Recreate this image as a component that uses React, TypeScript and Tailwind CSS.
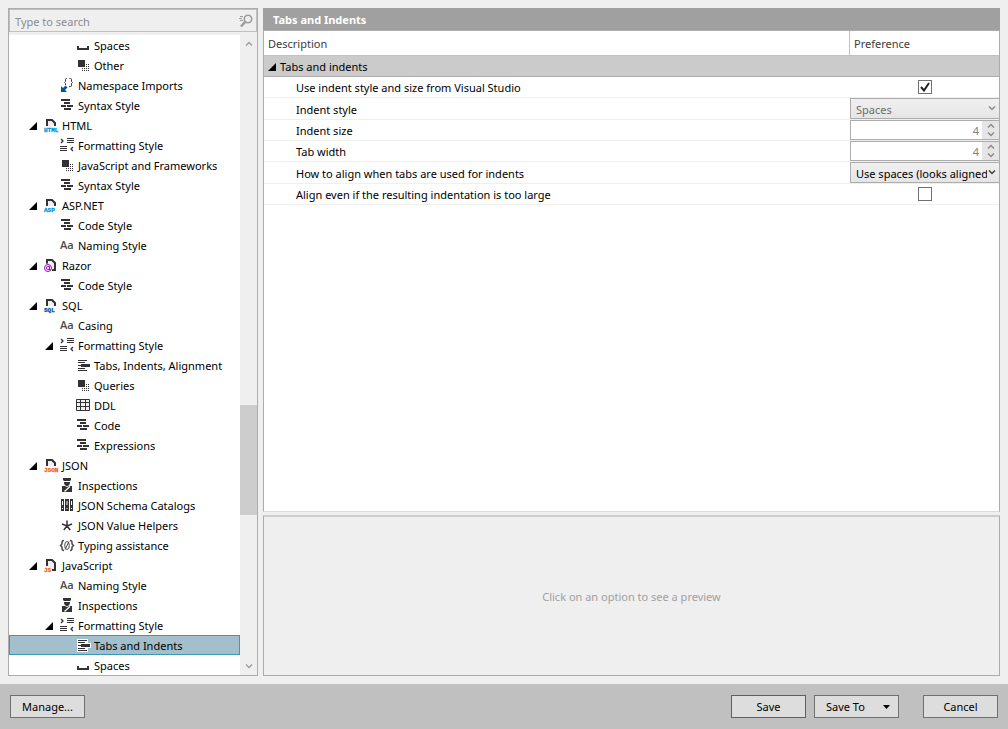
import type { ReactNode } from "react"

type IconName =
  | "spaces"
  | "other"
  | "imports"
  | "syntax"
  | "html"
  | "asp"
  | "razor"
  | "sql"
  | "json"
  | "js"
  | "formatting"
  | "naming"
  | "tabs"
  | "table"
  | "inspections"
  | "catalogs"
  | "asterisk"
  | "typing"

interface TreeNode {
  label: string
  icon: IconName
  level: 1 | 2 | 3
  expanded?: boolean
  selected?: boolean
}

const nodes: TreeNode[] = [
  { label: "Spaces", icon: "spaces", level: 3 },
  { label: "Other", icon: "other", level: 3 },
  { label: "Namespace Imports", icon: "imports", level: 2 },
  { label: "Syntax Style", icon: "syntax", level: 2 },
  { label: "HTML", icon: "html", level: 1, expanded: true },
  { label: "Formatting Style", icon: "formatting", level: 2 },
  { label: "JavaScript and Frameworks", icon: "other", level: 2 },
  { label: "Syntax Style", icon: "syntax", level: 2 },
  { label: "ASP.NET", icon: "asp", level: 1, expanded: true },
  { label: "Code Style", icon: "syntax", level: 2 },
  { label: "Naming Style", icon: "naming", level: 2 },
  { label: "Razor", icon: "razor", level: 1, expanded: true },
  { label: "Code Style", icon: "syntax", level: 2 },
  { label: "SQL", icon: "sql", level: 1, expanded: true },
  { label: "Casing", icon: "naming", level: 2 },
  { label: "Formatting Style", icon: "formatting", level: 2, expanded: true },
  { label: "Tabs, Indents, Alignment", icon: "tabs", level: 3 },
  { label: "Queries", icon: "other", level: 3 },
  { label: "DDL", icon: "table", level: 3 },
  { label: "Code", icon: "syntax", level: 3 },
  { label: "Expressions", icon: "syntax", level: 3 },
  { label: "JSON", icon: "json", level: 1, expanded: true },
  { label: "Inspections", icon: "inspections", level: 2 },
  { label: "JSON Schema Catalogs", icon: "catalogs", level: 2 },
  { label: "JSON Value Helpers", icon: "asterisk", level: 2 },
  { label: "Typing assistance", icon: "typing", level: 2 },
  { label: "JavaScript", icon: "js", level: 1, expanded: true },
  { label: "Naming Style", icon: "naming", level: 2 },
  { label: "Inspections", icon: "inspections", level: 2 },
  { label: "Formatting Style", icon: "formatting", level: 2, expanded: true },
  { label: "Tabs and Indents", icon: "tabs", level: 3, selected: true },
  { label: "Spaces", icon: "spaces", level: 3 },
]

const indent = { 1: "pl-[19px]", 2: "pl-[35px]", 3: "pl-[51px]" }

function FileIcon({ tag, color, tall }: { tag: string; color: string; tall?: boolean }) {
  return (
    <>
      <path d={tall ? "M4 8V2h5l3 3v7H9" : "M4 8V2h5l3 3v3"} fill="#efefef" stroke="#323234" strokeWidth="2" />
      <text
        x="1"
        y="14"
        fontSize="6"
        fontWeight="700"
        fontFamily="Liberation Mono, monospace"
        fill={color}
        stroke={color}
        strokeWidth="0.300"
      >
        {tag}
      </text>
    </>
  )
}

const icons: Record<IconName, ReactNode> = {
  spaces: <path d="M2 8h2v2h8V8h2v4H2z" fill="#323234" />,
  other: (
    <>
      <path d="M3 2h7v7H3z" fill="#323234" />
      <path d="M11.500 6v8M13.500 6v8" stroke="#323234" strokeDasharray="1 1" />
      <path d="M7 10.500h4M7 12.500h4" stroke="#323234" strokeDasharray="1 1" />
    </>
  ),
  imports: (
    <>
      <path
        d="M8 .5H7.500q-1 0-1 1v2l-1 1 1 1v1.500M10.500 .5h1q1 0 1 1v2l1 1-1 1v2q0 1-1 1h-1.500"
        fill="none"
        stroke="#323234"
      />
      <path d="M2 8v6h6l-2-2 2.500-2.500-2-2L4 10z" fill="#0054a6" />
    </>
  ),
  syntax: <path d="M2 1h9v2H2zM5 4h6v2H5zM2 7h5v2H2zM8 7h6v2H8zM5 10h7v2H5z" fill="#323234" />,
  html: <FileIcon tag="HTML" color="#0095d7" />,
  asp: <FileIcon tag="ASP" color="#0095d7" />,
  sql: <FileIcon tag="SQL" color="#0054a6" />,
  json: <FileIcon tag="JSON" color="#f26522" />,
  js: <FileIcon tag="JS" color="#f26522" tall />,
  razor: (
    <>
      <path d="M4 8V2h5l3 3v7H9" fill="#efefef" stroke="#323234" strokeWidth="2" />
      <circle cx="5" cy="10" r="4.500" fill="#fff" />
      <circle cx="5" cy="10" r="3.500" fill="none" stroke="#9b00c8" />
      <path d="M6.500 11.500V8.500h-2q-1 0-1 1.500t1 1.500h3" fill="none" stroke="#9b00c8" />
    </>
  ),
  formatting: (
    <>
      <path d="M2 1l2 2-2 2M14 9l-2 2 2 2" fill="none" stroke="#323234" strokeWidth="1.300" />
      <path d="M8 .5h7M8 2.500h7M8 4.500h7M1 8.500h7M1 10.500h7M1 12.500h7" stroke="#323234" />
    </>
  ),
  naming: (
    <text x="1" y="11" fontSize="11" fontWeight="600" fontFamily="Open Sans, sans-serif" fill="#4a4a4a">
      Aa
    </text>
  ),
  tabs: (
    <>
      <path d="M2 1h11v4h3v5h-3v4H2z" fill="#fff" />
      <path d="M3 2.500h9M3 4.500h7M3 10.500h7M3 12.500h9" stroke="#323234" />
      <path d="M3 7h3V6h9v3H6V8H3z" fill="#323234" />
    </>
  ),
  table: (
    <>
      <path d="M1.500 1.500h13v11h-13z" fill="#efefef" stroke="#323234" />
      <path d="M5.500 1v12M10.500 1v12M1 4.500h14M1 8.500h14" stroke="#323234" />
    </>
  ),
  inspections: (
    <>
      <path d="M4 0h8v2l-1 1H5L4 2zM5 4h6q0 4-3 4T5 4z" fill="#323234" />
      <path d="M3 14V8h3l2 1 2-1h3v6z" fill="#323234" />
      <path d="M5.500 13.500L11 8.500" stroke="#fff" strokeWidth="1.200" />
    </>
  ),
  catalogs: (
    <>
      <path d="M2 1h3v12H2zM6 1h4v12H6zM11 1h3v12h-3z" fill="#323234" />
      <path d="M3 3h1v4H3zM7.500 3h1v4h-1zM12 3h1v4h-1zM3 10h1v1H3zM7.500 10h1v1h-1zM12 10h1v1h-1z" fill="#fff" />
    </>
  ),
  asterisk: (
    <path
      d="M8 2.500V8M3 6l5 2 5-2M4.800 12L8 8l3.200 4"
      fill="none"
      stroke="#323234"
      strokeWidth="1.500"
    />
  ),
  typing: (
    <>
      <path
        d="M5 2.500q-2 0-2 2V6L1.500 7.500 3 9v1.500q0 2 2 2M11 2.500q2 0 2 2V6l1.500 1.500L13 9v1.500q0 2-2 2"
        fill="none"
        stroke="#4a4a4a"
        strokeWidth="1.500"
      />
      <ellipse cx="8" cy="7.500" rx="2.300" ry="4" fill="none" stroke="#4a4a4a" />
      <path d="M6 11.500l4-8" stroke="#4a4a4a" />
    </>
  ),
}

function Triangle() {
  return (
    <svg width="8" height="8" viewBox="0 0 8 8" aria-hidden="true">
      <path d="M8 0v8H0z" fill="#000" />
    </svg>
  )
}

function Chevron({ up, className }: { up?: boolean; className?: string }) {
  return (
    <svg width="8" height="5" viewBox="0 0 8 5" className={className} aria-hidden="true">
      <path d={up ? "M1 4.500l3-3 3 3" : "M1 .5l3 3 3-3"} fill="none" stroke="currentColor" strokeWidth="1.500" />
    </svg>
  )
}

function TreeRow({ node }: { node: TreeNode }) {
  return (
    <li
      role="treeitem"
      aria-level={node.level}
      aria-expanded={node.expanded}
      aria-selected={!!node.selected}
      className={`flex h-5 items-center border pt-0.5 whitespace-nowrap ${
        node.selected ? "border-[#3c97b8] bg-[#a2bfcb]" : "border-transparent"
      }`}
    >
      <span className={indent[node.level]} />
      <span className="flex w-[14px] shrink-0">{node.expanded && <Triangle />}</span>
      <svg width="16" height="16" viewBox="0 0 16 16" className="mr-[3px] shrink-0" aria-hidden="true">
        {icons[node.icon]}
      </svg>
      {node.label}
    </li>
  )
}

function Sidebar() {
  return (
    <aside className="flex w-[250px] shrink-0 flex-col border border-[#acacac]">
      <div className="flex h-[23px] shrink-0 items-center border border-[#c0c0c0] pr-[3px] pl-[5px]">
        <input
          aria-label="Search options"
          placeholder="Type to search"
          className="min-w-0 flex-1 bg-transparent pt-0.5 outline-none placeholder:text-[#8c8c8c]"
        />
        <svg width="14" height="14" viewBox="0 0 14 14" aria-hidden="true">
          <circle cx="9" cy="5" r="3.700" fill="none" stroke="#9b9b9b" strokeWidth="1.600" />
          <path d="M6.500 7.500L2 12.500" stroke="#9b9b9b" strokeWidth="2.400" />
          <path d="M1 2.500h3M0 4.500h3M1 6.500h3" stroke="#9b9b9b" />
        </svg>
      </div>
      <div className="mt-[3px] flex min-h-0 flex-1">
        <ul role="tree" className="min-w-0 flex-1 overflow-hidden bg-white">
          {nodes.map((node, i) => (
            <TreeRow key={i} node={node} />
          ))}
        </ul>
        <div className="flex w-[17px] shrink-0 flex-col text-[#a0a0a0]">
          <button aria-label="Scroll up" className="flex h-[17px] items-center justify-center">
            <Chevron up />
          </button>
          <div className="grow-[353]" />
          <div className="grow-[110] bg-[#cdcdcd]" />
          <div className="grow-[143]" />
          <button aria-label="Scroll down" className="flex h-[17px] items-center justify-center">
            <Chevron />
          </button>
        </div>
      </div>
    </aside>
  )
}

function OptionRow({ label, id, tall, children }: { label: string; id: string; tall?: boolean; children: ReactNode }) {
  return (
    <tr className={tall ? "h-[22px]" : "h-[21px]"}>
      <td className="border-b border-[#efefef] p-0 pt-0.5 pl-8">
        <label htmlFor={id}>{label}</label>
      </td>
      <td className="border-b border-[#efefef] p-0 pl-px">{children}</td>
    </tr>
  )
}

function CheckBox({ id, defaultChecked }: { id: string; defaultChecked?: boolean }) {
  return (
    <div className="grid place-items-center">
      <input
        id={id}
        type="checkbox"
        defaultChecked={defaultChecked}
        className="peer col-start-1 row-start-1 size-[14px] appearance-none border border-[#707070] bg-white"
      />
      <svg
        width="10"
        height="10"
        viewBox="0 0 10 10"
        className="pointer-events-none col-start-1 row-start-1 hidden peer-checked:block"
        aria-hidden="true"
      >
        <path d="M1 5l3 3.500L9 1" fill="none" stroke="#212121" strokeWidth="2" />
      </svg>
    </div>
  )
}

function DropDown({ id, value, disabled }: { id: string; value: string; disabled?: boolean }) {
  return (
    <div className="grid items-center">
      <select
        id={id}
        disabled={disabled}
        className="col-start-1 row-start-1 h-[21px] w-full min-w-0 appearance-none border border-r-0 border-[#acacac] bg-linear-to-b from-[#f0f0f0] to-[#e5e5e5] pt-0.5 pr-3 pl-[5px] disabled:text-[#6d6d6d] disabled:opacity-100"
      >
        <option>{value}</option>
      </select>
      <Chevron
        className={`pointer-events-none col-start-1 row-start-1 mr-[3px] justify-self-end ${
          disabled ? "text-[#8c8c8c]" : "text-[#404040]"
        }`}
      />
    </div>
  )
}

function Spinner({ id, value }: { id: string; value: string }) {
  return (
    <div className="flex h-5 border border-r-0 border-[#acacac] bg-white">
      <input id={id} disabled defaultValue={value} className="min-w-0 flex-1 pt-0.5 pr-[3px] text-right text-[#808080]" />
      <div className="flex w-[17px] flex-col justify-around bg-[#e5e5e5] text-[#8c8c8c]">
        <button disabled aria-label="Increase" className="flex justify-center">
          <Chevron up />
        </button>
        <button disabled aria-label="Decrease" className="flex justify-center">
          <Chevron />
        </button>
      </div>
    </div>
  )
}

function OptionsTable() {
  return (
    <div className="min-h-0 flex-1 border-x border-b border-[#acacac] border-b-[#dcdcdc] bg-white">
      <table className="w-full table-fixed border-separate border-spacing-0">
        <colgroup>
          <col />
          <col className="w-[150px]" />
        </colgroup>
        <thead>
          <tr className="h-[26px] text-left text-[#3c3c3c]">
            <th className="border-t border-b border-[#acacac] border-b-[#b9c4cb] p-0 pt-0.5 pl-1 font-normal">
              Description
            </th>
            <th className="border-t border-b border-l border-[#b9c4cb] border-t-[#acacac] p-0 pt-0.5 pl-1 font-normal">
              Preference
            </th>
          </tr>
        </thead>
        <tbody>
          <tr className="h-[21px] bg-[#cbcbcb]">
            <td colSpan={2} className="border-b border-[#acacac] p-0 pt-0.5 pl-1">
              <button className="flex items-center gap-1">
                <Triangle />
                Tabs and indents
              </button>
            </td>
          </tr>
          <OptionRow id="vs" label="Use indent style and size from Visual Studio">
            <CheckBox id="vs" defaultChecked />
          </OptionRow>
          <OptionRow id="style" label="Indent style" tall>
            <DropDown id="style" value="Spaces" disabled />
          </OptionRow>
          <OptionRow id="size" label="Indent size">
            <Spinner id="size" value="4" />
          </OptionRow>
          <OptionRow id="width" label="Tab width">
            <Spinner id="width" value="4" />
          </OptionRow>
          <OptionRow id="align" label="How to align when tabs are used for indents" tall>
            <DropDown id="align" value="Use spaces (looks aligned)" />
          </OptionRow>
          <OptionRow id="large" label="Align even if the resulting indentation is too large">
            <CheckBox id="large" />
          </OptionRow>
        </tbody>
      </table>
    </div>
  )
}

const buttonClass = "h-[23px] w-[75px] border border-[#707070] bg-[#dddddd]"

export default function App() {
  return (
    <div className="flex h-screen flex-col overflow-hidden bg-[#efefef] font-['Noto_Sans','Open_Sans',sans-serif] text-[11px] leading-4 text-black">
      <div className="flex min-h-0 flex-1 gap-[5px] p-2">
        <Sidebar />
        <main className="flex min-w-0 flex-1 flex-col">
          <h1 className="flex h-[22px] shrink-0 items-center bg-[#a0a0a0] pt-0.5 pl-[10px] font-bold text-white">
            Tabs and Indents
          </h1>
          <OptionsTable />
          <section className="mt-[3px] flex h-[161px] shrink-0 items-center justify-center border border-t-2 border-[#acacac] border-t-[#cdcdcd] pt-0.5 text-[#a0a0a0]">
            Click on an option to see a preview
          </section>
        </main>
      </div>
      <footer className="flex h-[45px] shrink-0 items-center bg-[#c0c0c0] px-[10px]">
        <button className={buttonClass}>Manage...</button>
        <button className="ml-auto h-[23px] w-[75px] border border-[#0078d7] bg-[#dddddd]">Save</button>
        <button className="ml-2 flex h-[23px] w-[85px] items-center justify-between border border-[#707070] bg-[#dddddd] pr-2 pl-[11px]">
          Save To
          <svg width="7" height="4" viewBox="0 0 7 4" aria-hidden="true">
            <path d="M0 0h7L3.500 4z" fill="#000" />
          </svg>
        </button>
        <button className="ml-6 h-[23px] w-[75px] border border-[#707070] bg-[#dddddd]">Cancel</button>
      </footer>
    </div>
  )
}
